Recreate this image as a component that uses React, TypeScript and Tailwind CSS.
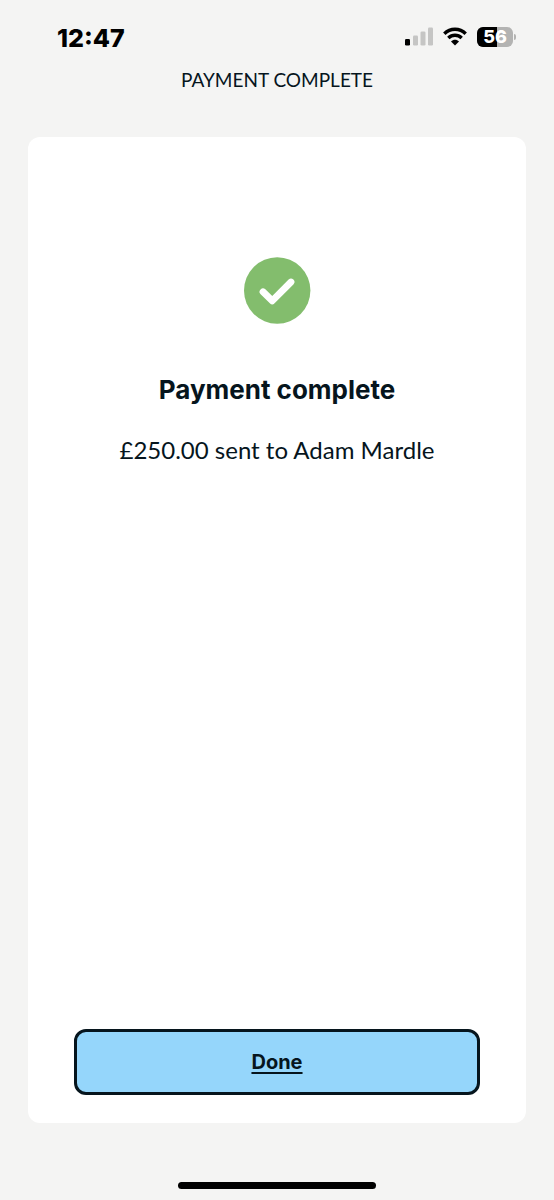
function SignalIcon() {
  return (
    <svg className="h-5 w-7" viewBox="0 0 28 20" aria-hidden="true">
      <rect x="0" y="12" width="5" height="6.5" rx="1.3" fill="#000" />
      <rect x="8" y="8.5" width="5" height="10" rx="1.3" fill="#c5c5c4" />
      <rect x="15.5" y="4.5" width="5" height="14" rx="1.3" fill="#c5c5c4" />
      <rect x="23" y="0.5" width="5" height="18" rx="1.3" fill="#c5c5c4" />
    </svg>
  );
}

function WifiIcon() {
  return (
    <svg className="h-5 w-6" viewBox="0 0 24 20" fill="none" aria-hidden="true">
      <path d="M1.3 6.7C7.3 0.7 16.7 0.7 22.7 6.7" stroke="#000" strokeWidth="3.4" />
      <path d="M5.3 11C9.2 7.3 14.8 7.3 18.7 11" stroke="#000" strokeWidth="3.4" />
      <path d="M12 18.5L8 14.5C10.4 12.3 13.6 12.3 16 14.5Z" fill="#000" />
    </svg>
  );
}

function Battery({ level }: { level: number }) {
  return (
    <div className="flex items-center gap-px">
      <div className="relative flex h-5 w-9 items-center justify-center overflow-hidden rounded-md bg-[#b3b3b2]">
        <div className="absolute inset-y-0 left-0 bg-black" style={{ width: `${level}%` }} />
        <span className="relative font-['Inter',sans-serif] text-lg leading-5 font-extrabold text-white">{level}</span>
      </div>
      <div className="h-1.5 w-0.5 rounded-r-full bg-[#b3b3b2]" />
    </div>
  );
}

function StatusBar() {
  return (
    <div className="flex h-14 items-end justify-between pr-[38px] pl-[57px]">
      <time className="mb-0.5 font-['Inter',sans-serif] text-[25px] leading-8 font-extrabold text-black">12:47</time>
      <div className="mb-[9px] flex items-center gap-2.5">
        <SignalIcon />
        <WifiIcon />
        <Battery level={56} />
      </div>
    </div>
  );
}

function SuccessIcon() {
  return (
    <svg className="size-[67px]" viewBox="0 0 67 67" fill="none" aria-hidden="true">
      <circle cx="33.2" cy="33.5" r="33.2" fill="#83bd6d" />
      <path
        d="M19 34.8L28.2 43.8L47 25"
        stroke="#fff"
        strokeWidth="6.8"
        strokeLinecap="round"
        strokeLinejoin="round"
      />
    </svg>
  );
}

export default function App() {
  return (
    <div className="flex min-h-screen flex-col bg-[#f4f4f3] font-['Inter',sans-serif] text-[#06151d]">
      <StatusBar />

      <header className="flex h-[81px] justify-center pt-2">
        <h1 className="font-['Lato',sans-serif] text-[19px] leading-8">PAYMENT COMPLETE</h1>
      </header>

      <main className="mx-7 flex grow flex-col items-center rounded-xl bg-white px-[46px] pt-[120px] pb-7 text-center">
        <SuccessIcon />
        <h2 className="mt-12 text-[26px] leading-9 font-bold">Payment complete</h2>
        <p className="mt-6 font-['Lato',sans-serif] text-2xl leading-9">£250.00 sent to Adam Mardle</p>
        <button
          type="button"
          className="mt-auto h-[66px] w-full rounded-xl border-3 border-[#06151d] bg-[#95d6fb] text-xl font-bold underline decoration-2 underline-offset-3"
        >
          Done
        </button>
      </main>

      <footer className="flex h-[77px] items-end justify-center pb-[11px]">
        <div className="h-[7px] w-[198px] rounded-full bg-black" />
      </footer>
    </div>
  );
}
